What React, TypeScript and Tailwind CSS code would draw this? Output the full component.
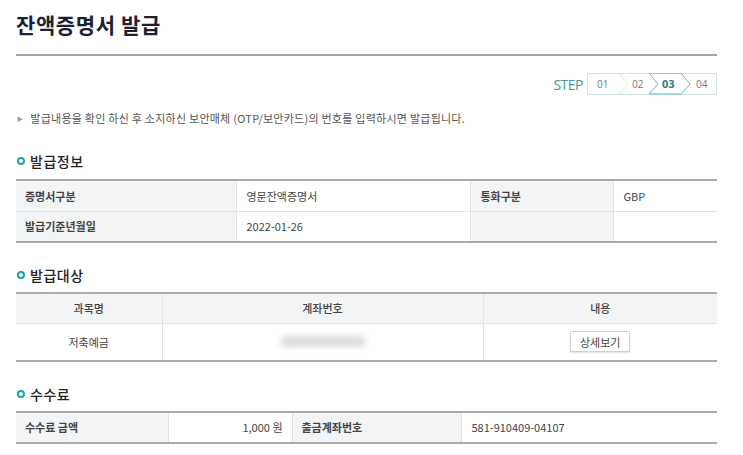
import React from "react";

const F = { fontFamily: '"Noto Sans CJK KR", "Noto Sans", sans-serif' };

function Heading({ children }: { children: React.ReactNode }) {
  return (
    <div className="flex items-center h-[20px]">
      <span className="w-[8px] h-[8px] rounded-full border-2 border-[#1aa3a8] ml-[1px] mr-[5px]" />
      <span className="text-[14px] font-medium text-[#222] tracking-[0.5px]">{children}</span>
    </div>
  );
}

export default function App() {
  return (
    <div style={F} className="w-[743px] h-[455px] bg-white overflow-hidden px-[16px] pr-[26px]">
      <div className="pt-[7px] h-[56px] border-b-2 border-[#a5a5a5]">
        <h1 className="text-[21px] font-bold text-[#1d2233] leading-[34px] tracking-[0.6px]">잔액증명서 발급</h1>
      </div>
      <div className="flex justify-end items-center mt-[17px] h-[22px]">
        <span className="text-[#4a9a9c] text-[14px] font-medium mr-[4px] tracking-[-0.5px]" style={{ fontFamily: '"Open Sans", sans-serif' }}>STEP</span>
        <div className="relative w-[130px] h-[22px] border border-[#d5e6e6] flex text-[10px] text-[#777] items-center" style={{ fontFamily: '"Open Sans", sans-serif' }}>
          <svg className="absolute left-0 top-[-1px]" width="130" height="22" viewBox="0 0 130 22">
            <polyline points="31,0 40,11 31,22" fill="none" stroke="#d5e6e6" strokeWidth="1" />
            <polyline points="61,0 93,0 102,11 93,21" fill="none" stroke="#5bbcbf" strokeWidth="1" />
            <polyline points="61,0 70,11 61,21 93,21" fill="none" stroke="#5bbcbf" strokeWidth="1" />
          </svg>
          <span className="absolute left-[9px]">01</span>
          <span className="absolute left-[44px]">02</span>
          <span className="absolute left-[74px] font-bold text-[#1f7f82] text-[11px]">03</span>
          <span className="absolute left-[108px]">04</span>
        </div>
      </div>
      <div className="flex items-center mt-[14px] h-[18px] text-[11px] text-[#555] tracking-[0.25px]">
        <span className="text-[6px] text-[#999] ml-[1px] mr-[7px]">▶</span>
        발급내용을 확인 하신 후 소지하신 보안매체 (OTP/보안카드)의 번호를 입력하시면 발급됩니다.
      </div>

      <div className="mt-[24px]"><Heading>발급정보</Heading></div>
      <table className="mt-[8px] w-full border-collapse text-[11px] text-[#444] table-fixed">
        <colgroup>
          <col className="w-[220px]" />
          <col className="w-[234px]" />
          <col className="w-[143px]" />
          <col />
        </colgroup>
        <tbody>
          <tr className="h-[31px] border-t-2 border-[#ababab] border-b border-b-[#e3e3e3]">
            <th className="bg-[#f2f4f5] text-left font-semibold pl-[9px] border-r border-[#e3e3e3]">증명서구분</th>
            <td className="pl-[10px]">영문잔액증명서</td>
            <th className="bg-[#f2f4f5] text-left font-semibold pl-[10px] border-x border-[#e3e3e3]">통화구분</th>
            <td className="pl-[10px]">GBP</td>
          </tr>
          <tr className="h-[31px] border-b-2 border-[#ababab]">
            <th className="bg-[#f2f4f5] text-left font-semibold pl-[9px] border-r border-[#e3e3e3]">발급기준년월일</th>
            <td className="pl-[10px]">2022-01-26</td>
            <th className="bg-[#f2f4f5] border-x border-[#e3e3e3]"></th>
            <td></td>
          </tr>
        </tbody>
      </table>

      <div className="mt-[22px]"><Heading>발급대상</Heading></div>
      <table className="mt-[7px] w-full border-collapse text-[11px] text-[#444] table-fixed">
        <colgroup>
          <col className="w-[146px]" />
          <col className="w-[321px]" />
          <col />
        </colgroup>
        <tbody>
          <tr className="h-[30px] border-t-2 border-[#ababab] border-b border-b-[#e3e3e3] bg-[#f2f4f5]">
            <th className="font-medium text-center border-r border-[#e3e3e3]">과목명</th>
            <th className="font-medium text-center border-r border-[#e3e3e3]">계좌번호</th>
            <th className="font-medium text-center">내용</th>
          </tr>
          <tr className="h-[38px] border-b-2 border-[#ababab]">
            <td className="text-center border-r border-[#e3e3e3]">저축예금</td>
            <td className="border-r border-[#e3e3e3]">
              <div className="flex justify-center">
                <div className="w-[86px] h-[11px] rounded-full bg-[#dcdcdc] blur-[3px]" />
              </div>
            </td>
            <td className="text-center">
              <button className="h-[21px] px-[9px] border border-[#cfcfcf] bg-white text-[11px] text-[#444] shadow-[0_1px_1px_rgba(0,0,0,0.08)]">상세보기</button>
            </td>
          </tr>
        </tbody>
      </table>

      <div className="mt-[22px]"><Heading>수수료</Heading></div>
      <table className="mt-[7px] w-full border-collapse text-[11px] text-[#444] table-fixed">
        <colgroup>
          <col className="w-[152px]" />
          <col className="w-[124px]" />
          <col className="w-[169px]" />
          <col />
        </colgroup>
        <tbody>
          <tr className="h-[31px] border-t-2 border-[#ababab] border-b-2 border-b-[#ababab]">
            <th className="bg-[#f2f4f5] text-left font-semibold pl-[9px] border-r border-[#e3e3e3]">수수료 금액</th>
            <td className="text-right pr-[9px]">1,000 원</td>
            <th className="bg-[#f2f4f5] text-left font-semibold pl-[9px] border-x border-[#e3e3e3]">출금계좌번호</th>
            <td className="pl-[10px]">581-910409-04107</td>
          </tr>
        </tbody>
      </table>
    </div>
  );
}
